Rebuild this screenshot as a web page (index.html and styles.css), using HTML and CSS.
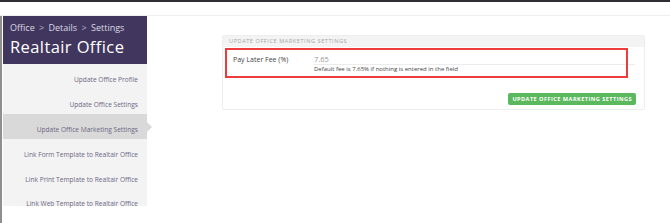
FILE: index.html
```html
<!DOCTYPE html>
<html lang="en">
<head>
  <meta charset="UTF-8" />
  <meta name="viewport" content="width=device-width, initial-scale=1.0" />
  <title>Office Settings</title>
  <link rel="stylesheet" href="styles.css">
</head>
<body>
  <div class="topbar"></div>
  <header class="site-header"></header>

  <div class="page">
    <aside class="sidebar">
      <div class="sidebar-head">
        <div class="crumbs">Office <span class="sep">&gt;</span> Details <span class="sep">&gt;</span> Settings</div>
        <h1>Realtair Office</h1>
      </div>
      <ul class="side-nav">
        <li><a href="#">Update Office Profile</a></li>
        <li><a href="#">Update Office Settings</a></li>
        <li class="active"><a href="#">Update Office Marketing Settings</a></li>
        <li><a href="#">Link Form Template to Realtair Office</a></li>
        <li><a href="#">Link Print Template to Realtair Office</a></li>
        <li><a href="#">Link Web Template to Realtair Office</a></li>
      </ul>
    </aside>

    <main class="content">
      <div class="panel">
        <div class="panel-title">Update Office Marketing Settings</div>
        <div class="panel-body">
          <div class="form-row">
            <label class="form-label">Pay Later Fee (%)</label>
            <div class="field">
              <div class="field-input">7.65</div>
              <div class="help">Default fee is 7.65% if nothing is entered in the field</div>
            </div>
          </div>
          <div class="highlight"></div>
          <div class="actions">
            <button class="btn-green">Update Office Marketing Settings</button>
          </div>
        </div>
      </div>
    </main>
  </div>
</body>
</html>
```

FILE: styles.css
```css
body {
  margin: 0;
  background: #fff;
  font-family: "Open Sans", Arial, sans-serif;
  color: #333;
}
.topbar {
  height: 2px;
  background: #2e3033;
}
.site-header {
  height: 13px;
  border-bottom: 1px solid #efefef;
}
.page {
  display: flex;
  align-items: flex-start;
  border-left: 2px solid #8f8f8f;
  height: 207px;
}
.sidebar {
  width: 144px;
  margin-left: 1px;
}
.sidebar-head {
  background: #41375e;
  color: #fff;
  padding: 6px 7px;
  height: 36px;
}
.crumbs {
  font-size: 9px;
  line-height: 11px;
  color: #dcd8e6;
}
.crumbs .sep {
  margin: 0 2px;
  color: #b9b3cc;
}
.sidebar-head h1 {
  margin: 4px 0 0 0;
  font-size: 16.5px;
  line-height: 20px;
  font-weight: 400;
  letter-spacing: 0.4px;
}
.side-nav {
  list-style: none;
  margin: 0;
  padding: 0;
  background: #f3f3f3;
}
.side-nav li {
  position: relative;
  height: 25px;
  line-height: 25px;
  text-align: right;
  padding-right: 9px;
}
.side-nav li:last-child {
  height: 17px;
  line-height: 22px;
}
.side-nav a {
  color: #6d6784;
  text-decoration: none;
  font-size: 6.6px;
}
.side-nav li.active {
  background: #d9d9d9;
}
.side-nav li.active::after {
  content: "";
  position: absolute;
  right: -5px;
  top: 8px;
  border-top: 5px solid transparent;
  border-bottom: 5px solid transparent;
  border-left: 5px solid #d9d9d9;
}
.content {
  padding: 19px 0 0 75px;
}
.panel {
  width: 421px;
  border: 1px solid #eeeeee;
  border-radius: 2px;
}
.panel-title {
  background: #f3f3f3;
  height: 11px;
  line-height: 11px;
  padding-left: 6px;
  font-size: 5.6px;
  letter-spacing: 0.55px;
  text-transform: uppercase;
  color: #a5a5a5;
}
.panel-body {
  position: relative;
  padding: 7px 0 3px 0;
}
.form-row {
  display: flex;
}
.form-label {
  width: 81px;
  padding-left: 10px;
  font-size: 7px;
  line-height: 12px;
  color: #444;
}
.field {
  flex: 1;
  margin-right: 9px;
}
.field-input {
  font-size: 7.5px;
  line-height: 10px;
  color: #999;
  border-bottom: 1px solid #ececec;
}
.help {
  font-size: 6px;
  line-height: 9px;
  color: #444;
}
.highlight {
  position: absolute;
  top: 1px;
  left: 2px;
  width: 403px;
  height: 30px;
  border: 2px solid #ee3b3b;
  box-sizing: border-box;
}
.actions {
  text-align: right;
  padding-right: 8px;
  margin-top: 10px;
}
.btn-green {
  background: #5cb85c;
  color: #fff;
  border: none;
  border-radius: 2px;
  height: 12px;
  padding: 0 4px;
  font-family: "Open Sans", Arial, sans-serif;
  font-size: 5.6px;
  font-weight: 700;
  letter-spacing: 0.45px;
  text-transform: uppercase;
  cursor: pointer;
}
```
